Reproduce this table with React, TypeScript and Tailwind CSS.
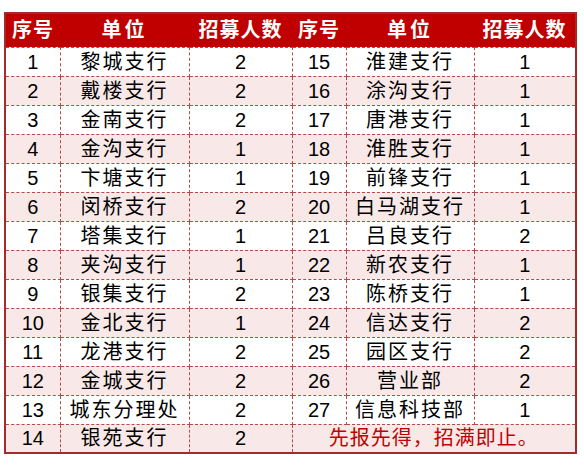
const left: [string, string, string][] = [
  ['1', '黎城支行', '2'],
  ['2', '戴楼支行', '2'],
  ['3', '金南支行', '2'],
  ['4', '金沟支行', '1'],
  ['5', '卞塘支行', '1'],
  ['6', '闵桥支行', '2'],
  ['7', '塔集支行', '1'],
  ['8', '夹沟支行', '1'],
  ['9', '银集支行', '2'],
  ['10', '金北支行', '1'],
  ['11', '龙港支行', '2'],
  ['12', '金城支行', '2'],
  ['13', '城东分理处', '2'],
  ['14', '银苑支行', '2'],
]

const right: [string, string, string][] = [
  ['15', '淮建支行', '1'],
  ['16', '涂沟支行', '1'],
  ['17', '唐港支行', '1'],
  ['18', '淮胜支行', '1'],
  ['19', '前锋支行', '1'],
  ['20', '白马湖支行', '1'],
  ['21', '吕良支行', '2'],
  ['22', '新农支行', '1'],
  ['23', '陈桥支行', '1'],
  ['24', '信达支行', '2'],
  ['25', '园区支行', '2'],
  ['26', '营业部', '2'],
  ['27', '信息科技部', '1'],
]

const cell = 'border border-dashed border-[#b54a4a] text-center align-middle p-0'

export default function App() {
  return (
    <div className="w-[584px] h-[465px] bg-white pt-[12px] pl-[4px]"
      style={{ fontFamily: '"Liberation Sans", "Noto Sans CJK SC", sans-serif' }}>
      <table className="table-fixed border-collapse border-2 border-solid border-[#a52a2a] w-[571px] text-[20px] leading-none text-black">
        <colgroup>
          <col className="w-[55px]" />
          <col className="w-[129px]" />
          <col className="w-[103px]" />
          <col className="w-[54px]" />
          <col className="w-[128px]" />
          <col className="w-[102px]" />
        </colgroup>
        <thead>
          <tr className="h-[34px] bg-[#c00000] text-white font-bold tracking-[1px]">
            <th className="p-0">序号</th>
            <th className="p-0 tracking-[3px]">单位</th>
            <th className="p-0">招募人数</th>
            <th className="p-0">序号</th>
            <th className="p-0 tracking-[3px]">单位</th>
            <th className="p-0">招募人数</th>
          </tr>
        </thead>
        <tbody>
          {left.map((l, i) => {
            const r = right[i]
            return (
              <tr key={i} className={`h-[29px] ${i % 2 === 1 ? 'bg-[#f9e8e8]' : 'bg-white'}`}>
                <td className={cell}>{l[0]}</td>
                <td className={`${cell} tracking-[2px]`}>{l[1]}</td>
                <td className={cell}>{l[2]}</td>
                {r ? (
                  <>
                    <td className={cell}>{r[0]}</td>
                    <td className={`${cell} tracking-[2px]`}>{r[1]}</td>
                    <td className={cell}>{r[2]}</td>
                  </>
                ) : (
                  <td colSpan={3} className={`${cell} text-[#c00000] tracking-[1px]`}>先报先得，招满即止。</td>
                )}
              </tr>
            )
          })}
        </tbody>
      </table>
    </div>
  )
}
